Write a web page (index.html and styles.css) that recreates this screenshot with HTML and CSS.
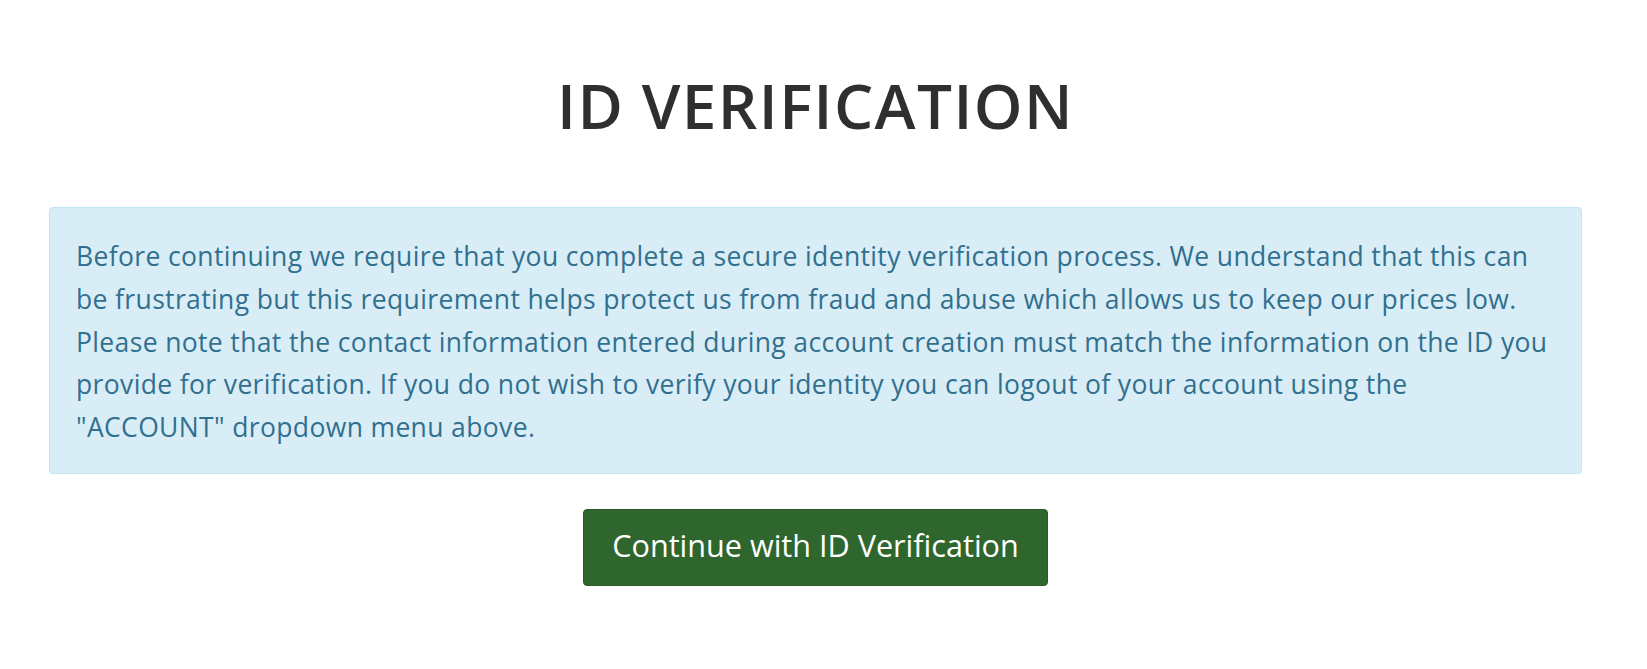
FILE: index.html
```html
<!DOCTYPE html>
<html lang="en">
<head>
<meta charset="utf-8">
<title>ID Verification</title>
<link rel="stylesheet" href="styles.css">
</head>
<body>
<main class="page">
  <h1 class="title">ID VERIFICATION</h1>
  <div class="alert">Before continuing we require that you complete a secure identity verification process. We understand that this can be frustrating but this requirement helps protect us from fraud and abuse which allows us to keep our prices low. Please note that the contact information entered during account creation must match the information on the ID you provide for verification. If you do not wish to verify your identity you can logout of your account using the "ACCOUNT" dropdown menu above.</div>
  <div class="actions">
    <button class="btn" type="button">Continue with ID Verification</button>
  </div>
</main>
</body>
</html>
```
FILE: styles.css
```css
html, body {
  margin: 0;
  background: #ffffff;
}
body {
  font-family: "Open Sans", "DejaVu Sans", sans-serif;
}
.page {
  padding: 71px 65px 0 49px;
  display: flex;
  flex-direction: column;
}
.title {
  margin: 0;
  font-size: 62px;
  line-height: 68px;
  font-weight: 600;
  letter-spacing: 1.4px;
  color: #2f2f2f;
  text-align: center;
}
.alert {
  margin-top: 68px;
  border: 1px solid #bce8f1;
  border-radius: 4px;
  background: #d9edf7;
  color: #31708f;
  font-size: 26.5px;
  letter-spacing: 0.36px;
  line-height: 42.8px;
  padding: 27px 26px 24px 26px;
}
.actions {
  margin-top: 35px;
  display: flex;
  justify-content: center;
}
.btn {
  font-family: "Open Sans", "DejaVu Sans", sans-serif;
  font-size: 30.6px;
  line-height: 45px;
  color: #ffffff;
  background: #2e662e;
  border: 1px solid #285a28;
  border-radius: 4px;
  padding: 13px 28px 17px 28px;
  cursor: pointer;
}
```
